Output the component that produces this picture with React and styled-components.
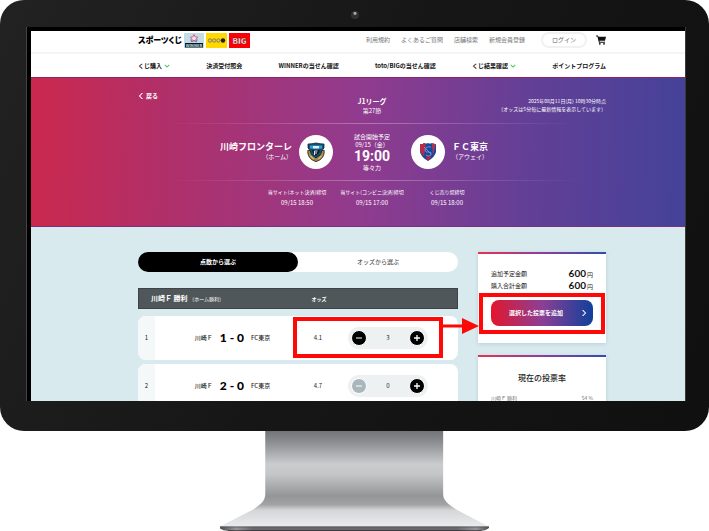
import { useState } from "react";
import styled, { createGlobalStyle } from "styled-components";

const GlobalStyle = createGlobalStyle`
  * {
    box-sizing: border-box;
  }

  body {
    margin: 0;
    background: #fff;
    color: #222;
    font-family: "Noto Sans CJK JP", sans-serif;
    font-size: 6px;
    line-height: 8px;
  }

  button {
    font: inherit;
    color: inherit;
    border: 0;
    padding: 0;
    cursor: pointer;
  }

  a {
    color: inherit;
    text-decoration: none;
  }
`;

const subLinks = ["利用規約", "よくあるご質問", "店舗検索", "新規会員登録"];

const navLinks = [
  { label: "くじ購入", open: true },
  { label: "決済受付照会" },
  { label: "WINNERの当せん確認" },
  { label: "toto/BIGの当せん確認" },
  { label: "くじ結果確認", open: true },
  { label: "ポイントプログラム" },
];

const deadlines = [
  { label: "当サイト(ネット決済)締切", time: "09/15 18:50" },
  { label: "当サイト(コンビニ決済)締切", time: "09/15 17:00" },
  { label: "くじ売り場締切", time: "09/15 18:00" },
];

const scores = [
  { no: 1, score: "1 - 0", odds: "4.1", count: 3, marked: true },
  { no: 2, score: "2 - 0", odds: "4.7", count: 0 },
];

const Chevron = ({ d, color, size }) => (
  <svg width={size} height={size} viewBox="0 0 8 8" aria-hidden="true">
    <path d={d} fill="none" stroke={color} strokeWidth="1.4" />
  </svg>
);

const WinnerLogo = () => (
  <svg width="20" height="15" viewBox="0 0 20 15" aria-label="WINNER">
    <rect width="20" height="15" fill="#c3dce6" />
    <path
      d="M10 1.5l1.2 2.4 2.6.3-1.9 1.8.5 2.6L10 7.400l-2.400 1.200.5-2.600-1.900-1.800 2.600-.3z"
      fill="#f2dfe8"
      stroke="#d8567c"
      strokeWidth=".9"
    />
    <path d="M6.600 6.400l1 2.400L10 7.600l2.400 1.200 1-2.400" fill="none" stroke="#5470b5" strokeWidth=".8" />
    <rect x="1" y="10" width="18" height="4.500" fill="#07151b" />
    <text x="10" y="13.800" textAnchor="middle" fontSize="4" fontWeight="900" fill="#b9d0da">
      WINNER
    </text>
  </svg>
);

const TotoLogo = () => (
  <svg width="21" height="15" viewBox="0 0 21 15" aria-label="toto">
    <rect width="21" height="15" fill="#ffd800" />
    <circle cx="4" cy="7.500" r="1.700" fill="#d9c777" stroke="#8f7d31" strokeWidth=".9" />
    <circle cx="8.200" cy="7.500" r="1.700" fill="#d9c777" stroke="#8f7d31" strokeWidth=".9" />
    <circle cx="12.400" cy="7.500" r="1.700" fill="#d9c777" stroke="#8f7d31" strokeWidth=".9" />
    <circle cx="17" cy="7.500" r="2.200" fill="#1f1b05" />
  </svg>
);

const BigLogo = () => (
  <svg width="21" height="15" viewBox="0 0 21 15" aria-label="BIG">
    <rect width="21" height="15" fill="#fb0007" />
    <text x="10.500" y="11" textAnchor="middle" fontSize="8" fontWeight="900" fill="#fff" stroke="#5e0d0d" strokeWidth=".3">
      BIG
    </text>
  </svg>
);

const CartIcon = () => (
  <svg width="10" height="10" viewBox="0 0 10 10" aria-hidden="true">
    <path d="M0 .5h2l.4 1.300H10L9 5.800H3.500l.2.900H9v1H2.900L1.400 1.500H0z" fill="#111" />
    <circle cx="3.800" cy="8.800" r=".9" fill="#111" />
    <circle cx="8" cy="8.800" r=".9" fill="#111" />
  </svg>
);

const FrontaleCrest = () => (
  <svg width="20" height="20" viewBox="0 0 20 20" role="img" aria-label="川崎フロンターレ">
    <path d="M2 8c-1 5 2 10 8 11.500C16 18 19 13 18 8l-3 1-5 7-5-7z" fill="#a58a4c" stroke="#3d3623" />
    <path d="M2 2q4 0 8-1 4 1 8 1v4l-2 2q0 5-6 8-6-3-6-8L2 6z" fill="#164f73" stroke="#0c2735" strokeWidth=".8" />
    <path d="M4 3.500h12v3H4z" fill="#2fa3d2" />
    <path d="M7 4h6v2.500H7z" fill="#d9f3fb" />
    <path d="M6 8h8l-1 3-3 3-3-3z" fill="#11212b" />
    <path d="M8.500 13V9h3M8.500 11h2.500" stroke="#d8e4e8" fill="none" />
    <path d="M4.500 14l3 3M15.500 14l-3 3" stroke="#e8d9a3" />
  </svg>
);

const TokyoCrest = () => (
  <svg width="18" height="20" viewBox="0 0 18 20" role="img" aria-label="FC東京">
    <path d="M1 2q2 1 4-1 2 1 4 0 2 1 4 0 2 2 4 1v8q-1 5-8 9-7-4-8-9z" fill="#17489a" />
    <path d="M1 2q2 1 4-1l2 1-2 12q-3-2-4-5z" fill="#b72a4a" />
    <path d="M13 2l1-1 2 1v3l-2 8z" fill="#c0304c" />
    <path d="M7 15l2-1 3 1-3 4z" fill="#d61d2c" />
    <path d="M12 5q-5-1-6 3 0 3 4 2 3 0 2 3-2 2-5 0M5 5l7 7" fill="none" stroke="#7fa5de" strokeWidth=".8" />
  </svg>
);

const Stand = () => (
  <StandSvg viewBox="0 0 268 100" aria-hidden="true">
    <defs>
      <linearGradient id="neck" x1="0" y1="0" x2="0" y2="1">
        <stop offset="0" stopColor="#737478" />
        <stop offset=".12" stopColor="#8d8e91" />
        <stop offset=".35" stopColor="#cbccce" />
        <stop offset=".45" stopColor="#c5c6c8" />
        <stop offset=".68" stopColor="#949597" />
        <stop offset=".77" stopColor="#a2a3a5" />
        <stop offset=".83" stopColor="#d5d6d7" />
        <stop offset="1" stopColor="#eaebec" />
      </linearGradient>
      <linearGradient id="foot" x1="0" y1="0" x2="1" y2="0">
        <stop offset="0" stopColor="#4d4e50" />
        <stop offset=".06" stopColor="#96979a" />
        <stop offset=".12" stopColor="#68696c" />
        <stop offset=".88" stopColor="#68696c" />
        <stop offset=".95" stopColor="#96979a" />
        <stop offset="1" stopColor="#4d4e50" />
      </linearGradient>
    </defs>
    <path
      d="M45 0H222V63C222 69 227 73 235 78L267 95H0L33 78C41 73 45 69 45 63Z"
      fill="url(#neck)"
    />
    <path d="M0 95Q134 95 268 95L267 97Q264 99 260 99.500H8Q3 99 0 97Z" fill="url(#foot)" />
    <path d="M0 95.500H268" stroke="#55565a" strokeWidth=".8" />
    <path d="M8 99.500H260" stroke="#171012" strokeWidth="1" />
  </StandSvg>
);

const SiteHeader = () => (
  <header>
    <TopBar>
      <BrandLink href="#">スポーツくじ</BrandLink>
      <Logos>
        <WinnerLogo />
        <TotoLogo />
        <BigLogo />
      </Logos>
      <SubNav>
        {subLinks.map((label) => (
          <a href="#" key={label}>
            {label}
          </a>
        ))}
      </SubNav>
      <LoginButton>ログイン</LoginButton>
      <CartButton aria-label="カート">
        <CartIcon />
      </CartButton>
    </TopBar>
    <MainNav>
      {navLinks.map((item) => (
        <NavLink href="#" key={item.label}>
          {item.label}
          {item.open && <Chevron d="M1 2.500l3 3 3-3" color="#4cc764" size={6} />}
        </NavLink>
      ))}
    </MainNav>
  </header>
);

const MatchHero = () => (
  <Hero>
    <HeroTop>
      <BackLink href="#">
        <Chevron d="M6 0L2 4l4 4" color="#fff" size={6} />
        戻る
      </BackLink>
      <League>
        <LeagueName>J1リーグ</LeagueName>
        <div>第27節</div>
      </League>
      <Updated>
        2025年08月11日(月) 10時30分時点
        <br />
        （オッズは5分毎に最新情報を表示しています）
      </Updated>
    </HeroTop>
    <FadeLine />
    <MatchRow>
      <Team $align="right">
        <TeamName>川崎フロンターレ</TeamName>
        <div>（ホーム）</div>
      </Team>
      <Crest>
        <FrontaleCrest />
      </Crest>
      <Kickoff>
        <div>試合開始予定</div>
        <div>09/15（金）</div>
        <KickoffTime>19:00</KickoffTime>
        <div>等々力</div>
      </Kickoff>
      <Crest>
        <TokyoCrest />
      </Crest>
      <Team>
        <TeamName>ＦＣ東京</TeamName>
        <div>（アウェイ）</div>
      </Team>
    </MatchRow>
    <FadeLine />
    <Deadlines>
      {deadlines.map((item) => (
        <div key={item.label}>
          <dt>{item.label}</dt>
          <dd>{item.time}</dd>
        </div>
      ))}
    </Deadlines>
  </Hero>
);

const ScoreRow = ({ row }) => {
  const [count, setCount] = useState(row.count);

  return (
    <Row>
      <NumberCell>{row.no}</NumberCell>
      <ScoreCell>
        川崎Ｆ <Score>{row.score}</Score> FC東京
      </ScoreCell>
      <OddsCell>{row.odds}</OddsCell>
      <StepperCell>
        <Stepper>
          <StepButton
            aria-label="減らす"
            disabled={count === 0}
            onClick={() => setCount((prev) => prev - 1)}
          >
            <svg width="8" height="8" viewBox="0 0 8 8">
              <path d="M1 4h6" stroke="#fff" />
            </svg>
          </StepButton>
          <output>{count}</output>
          <StepButton aria-label="増やす" onClick={() => setCount((prev) => prev + 1)}>
            <svg width="8" height="8" viewBox="0 0 8 8">
              <path d="M1 4h6M4 1v6" stroke="#fff" strokeWidth="1.300" />
            </svg>
          </StepButton>
        </Stepper>
        {row.marked && (
          <StepperMark>
            <Arrow viewBox="0 0 40 18" aria-hidden="true">
              <path d="M0 7.500h23V1l17 8-17 8v-6.500H0z" fill="#fe0808" />
            </Arrow>
          </StepperMark>
        )}
      </StepperCell>
    </Row>
  );
};

const App = () => {
  const [tab, setTab] = useState("score");

  return (
    <>
      <GlobalStyle />
      <Monitor>
        <Camera />
        <Screen>
          <SiteHeader />
          <MatchHero />
          <Content>
            <div>
              <Tabs role="tablist">
                <Tab
                  role="tab"
                  aria-selected={tab === "score"}
                  $active={tab === "score"}
                  onClick={() => setTab("score")}
                >
                  点数から選ぶ
                </Tab>
                <Tab
                  role="tab"
                  aria-selected={tab === "odds"}
                  $active={tab === "odds"}
                  onClick={() => setTab("odds")}
                >
                  オッズから選ぶ
                </Tab>
              </Tabs>
              <ScoreTable>
                <thead>
                  <HeadRow>
                    <HeadTitle>
                      川崎Ｆ 勝利 <small>（ホーム勝利）</small>
                    </HeadTitle>
                    <HeadOdds>オッズ</HeadOdds>
                  </HeadRow>
                </thead>
                <tbody>
                  {scores.map((row) => (
                    <ScoreRow row={row} key={row.no} />
                  ))}
                </tbody>
              </ScoreTable>
            </div>
            <aside>
              <Card>
                <Amount>
                  <span>追加予定金額</span>
                  <span>
                    <strong>600</strong>円
                  </span>
                </Amount>
                <Amount>
                  <span>購入合計金額</span>
                  <span>
                    <strong>600</strong>円
                  </span>
                </Amount>
                <AddWrap>
                  <AddButton>
                    <span>選択した投票を追加</span>
                    <Chevron d="M2 0l4 4-4 4" color="#fff" size={6} />
                  </AddButton>
                  <AddMark />
                </AddWrap>
              </Card>
              <Card>
                <RateTitle>現在の投票率</RateTitle>
                <Rate>
                  <span>川崎Ｆ 勝利</span>
                  <span>54 %</span>
                </Rate>
              </Card>
            </aside>
          </Content>
        </Screen>
      </Monitor>
      <Stand />
    </>
  );
};

export default App;

const Monitor = styled.div`
  position: relative;
  padding: 27px 24px 30px 27px;
  border-radius: 24px;
  background: linear-gradient(115deg, #222 0%, #161616 50%, #101010 100%);
`;

const Camera = styled.span`
  position: absolute;
  top: 11px;
  left: 50%;
  width: 8px;
  height: 8px;
  margin-left: -4px;
  border-radius: 50%;
  background: radial-gradient(circle at 50% 30%, #aaa 0 1px, #303030 2px);
`;

const Screen = styled.div`
  aspect-ratio: 658 / 374;
  overflow: hidden;
  border-top: 4px solid #000;
  border-left: 4px solid #000;
  box-shadow: -1px 0 #444, 1px 0 #3a3a3a;
  background: #d9eaef;
`;

const StandSvg = styled.svg`
  display: block;
  width: 38%;
  margin: 0 auto;
`;

const TopBar = styled.div`
  display: flex;
  align-items: center;
  height: 23px;
  padding: 0 79px 3px 107px;
  border-bottom: 2px solid #f5f5f5;
  background: #fff;
`;

const BrandLink = styled.a`
  color: #000;
  font-size: 8px;
  font-weight: 900;
  font-feature-settings: "palt";
  white-space: nowrap;
`;

const Logos = styled.div`
  display: flex;
  gap: 2px;
  margin-left: 2px;
`;

const SubNav = styled.nav`
  display: flex;
  gap: 11px;
  margin-left: auto;
  color: #777;
  white-space: nowrap;
`;

const LoginButton = styled.button`
  width: 46px;
  height: 16px;
  margin: 0 9px 0 16px;
  border: 2px solid #f1f1f1;
  border-radius: 8px;
  background: #fff;
  color: #666;
  line-height: 10px;
`;

const CartButton = styled.button`
  display: flex;
  background: none;
`;

const MainNav = styled.nav`
  display: flex;
  align-items: center;
  justify-content: space-between;
  height: 23px;
  padding: 0 79px 0 107px;
  background: #fff;
`;

const NavLink = styled.a`
  display: flex;
  align-items: center;
  gap: 2px;
  color: #111;
  font-weight: 700;
  white-space: nowrap;
`;

const Hero = styled.section`
  height: 150px;
  padding: 14px 79px 0 107px;
  border-top: 1px solid #8e2468;
  border-bottom: 1px solid #79307f;
  background: linear-gradient(92deg, #cb284d 0%, #b12f68 20%, #913b8e 50%, #643f96 75%, #444299 100%);
  color: #fff;
`;

const HeroTop = styled.div`
  display: grid;
  grid-template-columns: 1fr auto 1fr;
  height: 31px;
`;

const BackLink = styled.a`
  display: flex;
  align-items: center;
  align-self: start;
  gap: 2px;
  font-weight: 700;
`;

const League = styled.div`
  padding-top: 4px;
  text-align: center;
  line-height: 10px;
`;

const LeagueName = styled.div`
  font-size: 7px;
  font-weight: 700;
`;

const Updated = styled.div`
  padding-top: 5px;
  font-size: 5px;
  line-height: 8px;
  text-align: right;
  white-space: nowrap;
`;

const FadeLine = styled.div`
  height: 1px;
  margin: 0 26px;
  background: linear-gradient(90deg, transparent, rgba(255, 255, 255, 0.3) 50%, transparent);
`;

const MatchRow = styled.div`
  display: grid;
  grid-template-columns: 1fr 34px 64px 34px 1fr;
  gap: 7px;
  align-items: center;
  height: 56px;
`;

const Team = styled.div`
  text-align: ${({ $align }) => $align || "left"};
  line-height: 10px;
`;

const TeamName = styled.div`
  font-size: 9px;
  font-weight: 700;
`;

const Crest = styled.div`
  display: flex;
  align-items: center;
  justify-content: center;
  height: 34px;
  border-radius: 50%;
  background: #fff;
`;

const Kickoff = styled.div`
  text-align: center;
`;

const KickoffTime = styled.div`
  font-family: Roboto, sans-serif;
  font-size: 14px;
  font-weight: 700;
  line-height: 15px;
`;

const Deadlines = styled.dl`
  display: grid;
  grid-template-columns: repeat(3, 75px);
  justify-content: center;
  margin: 5px 0 0;
  text-align: center;
  line-height: 11px;
  white-space: nowrap;

  dt {
    font-size: 5px;
  }

  dd {
    margin: 0;
  }
`;

const Content = styled.main`
  display: grid;
  grid-template-columns: 5fr 2fr;
  gap: 20px;
  padding: 25px 79px 0 107px;
`;

const Tabs = styled.div`
  display: flex;
  height: 20px;
  border-radius: 10px;
  background: #fff;
`;

const Tab = styled.button`
  flex: 1;
  border-radius: 10px;
  background: ${({ $active }) => ($active ? "#000" : "transparent")};
  color: ${({ $active }) => ($active ? "#fff" : "#333")};
  font-weight: ${({ $active }) => ($active ? 700 : 400)};
`;

const ScoreTable = styled.table`
  display: block;
  margin-top: 16px;

  thead,
  tbody {
    display: block;
  }

  th,
  td {
    padding: 0;
  }
`;

const HeadRow = styled.tr`
  display: grid;
  grid-template-columns: 160px 40px;
  align-items: center;
  height: 21px;
  margin-bottom: 7px;
  border: 1px solid #3d4346;
  background: #50575a;
  color: #fff;
`;

const HeadTitle = styled.th`
  padding-left: 12px !important;
  font-size: 7px;
  text-align: left;

  small {
    font-size: 5px;
    font-weight: 400;
  }
`;

const HeadOdds = styled.th`
  font-size: 5px;
  text-align: center;
`;

const Row = styled.tr`
  display: grid;
  grid-template-columns: 17px 1fr 40px 120px;
  align-items: center;
  height: 44px;
  margin-bottom: 4px;
  border-radius: 8px;
  background: #fff;
`;

const NumberCell = styled.td`
  display: grid;
  place-items: center;
  height: 100%;
  border-radius: 8px 0 0 8px;
  background: #f4f8f9;
`;

const ScoreCell = styled.td`
  display: flex;
  align-items: center;
  justify-content: center;
  gap: 7px;
  padding-left: 12px !important;
  font-weight: 500;
`;

const Score = styled.strong`
  color: #000;
  font-family: Lato, sans-serif;
  font-size: 12px;
  font-weight: 900;
`;

const OddsCell = styled.td`
  text-align: center;
`;

const StepperCell = styled.td`
  position: relative;
  padding: 0 30px 0 10px !important;
`;

const Stepper = styled.div`
  display: flex;
  align-items: center;
  justify-content: space-between;
  height: 22px;
  padding: 0 3px;
  border-radius: 11px;
  background: #edf1f2;
`;

const StepButton = styled.button`
  display: grid;
  place-items: center;
  width: 16px;
  height: 16px;
  border: 1px solid #fff;
  border-radius: 50%;
  background: #000;

  &:disabled {
    background: #a9b6bb;
  }
`;

/* frames the odds and the stepper of one row */
const StepperMark = styled.span`
  position: absolute;
  top: -10px;
  right: 15px;
  bottom: -9px;
  left: -45px;
  border: 4px solid #fe0808;
  pointer-events: none;
`;

const Arrow = styled.svg`
  position: absolute;
  z-index: 1;
  top: -4px;
  left: 100%;
  width: 40px;
  height: 18px;
`;

const Card = styled.section`
  min-height: 91px;
  margin-bottom: 12px;
  padding: 14px 13px 0;
  border-top: 2px solid;
  border-image: linear-gradient(90deg, #e63350, #8c3f9b 50%, #2f4fa8) 1;
  background: #fff;
  box-shadow: 0 1px 4px rgba(60, 100, 115, 0.2);
`;

const Amount = styled.div`
  display: flex;
  align-items: center;
  justify-content: space-between;
  height: 12px;

  strong {
    margin-right: 1px;
    color: #111;
    font-family: Lato, sans-serif;
    font-size: 10px;
    font-weight: 700;
  }
`;

const AddWrap = styled.div`
  position: relative;
  margin-top: 8px;
`;

const AddButton = styled.button`
  display: flex;
  align-items: center;
  width: 100%;
  height: 26px;
  padding-right: 6px;
  border-radius: 8px;
  background: linear-gradient(90deg, #e3162d, #8c3f94 50%, #10409c);
  color: #fff;
  font-weight: 700;

  span {
    flex: 1;
  }
`;

const AddMark = styled.span`
  position: absolute;
  inset: -7px -12px -8px;
  border: 4px solid #fe0808;
  pointer-events: none;
`;

const RateTitle = styled.h2`
  margin: 0 0 10px;
  font-size: 8px;
  font-weight: 500;
  line-height: 14px;
  text-align: center;
`;

const Rate = styled.div`
  display: flex;
  justify-content: space-between;
  color: #777;
  font-size: 5px;
  line-height: 5px;
`;
